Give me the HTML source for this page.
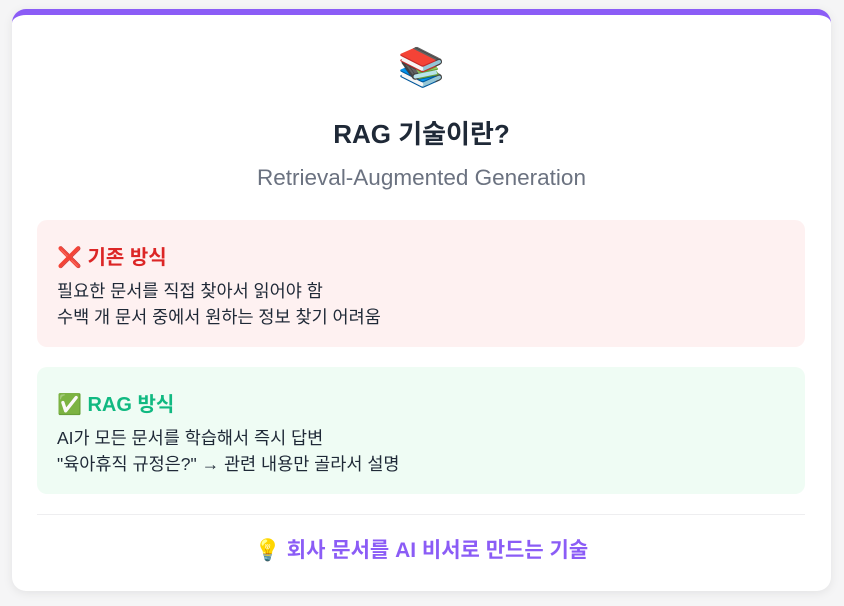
<!DOCTYPE html>
<html><head><meta charset="utf-8"><style>
html,body{margin:0;padding:0;width:844px;height:606px;background:#f5f5f6;overflow:hidden}
body{font-family:"Liberation Sans","Noto Sans CJK KR",sans-serif}
.card{position:absolute;left:12px;top:9px;width:819px;height:582px;background:#fff;border-radius:14px;border-top:6px solid #8b5cf6;box-sizing:border-box;box-shadow:0 2px 10px rgba(0,0,0,0.08)}
.c{position:absolute;left:0;width:100%;text-align:center}
.box{position:absolute;left:25px;width:768px;height:127px;border-radius:10px;box-sizing:border-box;padding:24px 20px}
.h{font-size:20px;font-weight:bold;margin-bottom:6px;line-height:28px}
.t{font-size:17.5px;color:#1f2937;line-height:26px}
</style></head><body>
<div class="card">
<div class="c" style="top:30px;font-size:38px;line-height:46px">📚</div>
<div class="c" style="top:101px;font-size:26px;font-weight:bold;color:#1f2937;line-height:36px">RAG 기술이란?</div>
<div class="c" style="top:149px;font-size:22.5px;color:#6b7280;line-height:28px">Retrieval-Augmented Generation</div>
<div class="box" style="top:205px;background:#fef1f1">
<div class="h" style="color:#dc2626">❌ 기존 방식</div>
<div class="t">필요한 문서를 직접 찾아서 읽어야 함<br>수백 개 문서 중에서 원하는 정보 찾기 어려움</div>
</div>
<div class="box" style="top:352px;background:#effcf4">
<div class="h" style="color:#10b981">✅ RAG 방식</div>
<div class="t">AI가 모든 문서를 학습해서 즉시 답변<br>"육아휴직 규정은?" → 관련 내용만 골라서 설명</div>
</div>
<div style="position:absolute;left:25px;width:768px;top:499px;border-top:1px solid #eeeef0"></div>
<div class="c" style="top:522px;font-size:21px;font-weight:bold;color:#8b5cf6;line-height:28px">💡 회사 문서를 AI 비서로 만드는 기술</div>
</div>
</body></html>
